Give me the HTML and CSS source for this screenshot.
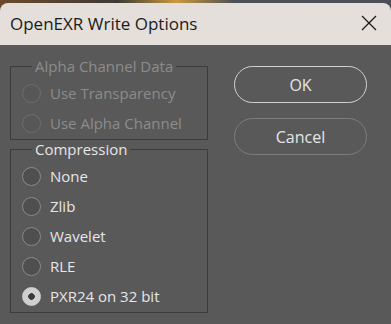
FILE: index.html
```html
<!DOCTYPE html>
<html lang="en">
<head>
  <meta charset="UTF-8">
  <title>OpenEXR Write Options</title>
  <link rel="stylesheet" href="styles.css">
</head>
<body>
  <div class="window">
    <div class="titlebar">
      <span class="title">OpenEXR Write Options</span>
      <svg class="close" width="16" height="16" viewBox="0 0 16 16">
        <path d="M1 1 L15 15 M15 1 L1 15" stroke="#1a1a1a" stroke-width="1.3" fill="none"/>
      </svg>
    </div>

    <div class="content">
      <div class="options">
        <!-- Alpha channel (disabled) -->
        <fieldset class="group disabled">
          <legend>Alpha Channel Data</legend>
          <div class="radio"><span class="dot"></span>Use Transparency</div>
          <div class="radio"><span class="dot"></span>Use Alpha Channel</div>
        </fieldset>

        <!-- Compression -->
        <fieldset class="group">
          <legend>Compression</legend>
          <div class="radio"><span class="dot"></span>None</div>
          <div class="radio"><span class="dot"></span>Zlib</div>
          <div class="radio"><span class="dot"></span>Wavelet</div>
          <div class="radio"><span class="dot"></span>RLE</div>
          <div class="radio checked"><span class="dot"></span>PXR24 on 32 bit</div>
        </fieldset>
      </div>

      <div class="buttons">
        <div class="btn primary">OK</div>
        <div class="btn">Cancel</div>
      </div>
    </div>
  </div>
</body>
</html>
```

FILE: styles.css
```css
body {
  margin: 0;
  width: 391px;
  height: 324px;
  overflow: hidden;
  background: linear-gradient(90deg, #6b4a2a 0%, #3d3a36 30%, #c99a3c 45%, #4b4f56 60%, #4b5058 100%);
  font-family: "Open Sans", "Noto Sans", sans-serif;
}

.window {
  margin-top: 3px;
  height: 321px;
  background-color: #595959;
  border-radius: 8px 8px 0 0;
  overflow: hidden;
}

.titlebar {
  height: 42px;
  background-color: #e4dfda;
  display: flex;
  align-items: center;
  justify-content: space-between;
  padding: 0 14px 0 10px;
}

.title {
  font-size: 17px;
  color: #1b1b1b;
  margin-top: -2px;
}

.close {
  margin-top: -2px;
}

.content {
  display: flex;
  padding: 12px 0 0 10px;
}

.options {
  width: 198px;
}

.group {
  margin: 0;
  border: 1px solid #3c3c3c;
  padding: 3px 0 1px 11px;
  color: #e6e6e6;
  font-size: 15px;
}

.group legend {
  padding: 0 3px;
  margin-left: 10px;
  line-height: 18px;
}

.group.disabled {
  color: #8c8c8c;
}

.radio {
  display: flex;
  align-items: center;
  gap: 9px;
  height: 30px;
}

.dot {
  width: 17px;
  height: 17px;
  border-radius: 50%;
  border: 1px solid #8a8a8a;
  background-color: #4f4f4f;
  flex: none;
}

.disabled .dot {
  border-color: #6e6e6e;
  background-color: #575757;
}

.checked .dot {
  border-color: #cfcfcf;
  background: radial-gradient(circle, #3a3a3a 0 3px, #cfcfcf 3.6px);
}

.buttons {
  display: flex;
  flex-direction: column;
  gap: 15px;
  margin-left: 26px;
  padding-top: 9px;
}

.btn {
  width: 131px;
  height: 35px;
  border: 1.5px solid #d2d2d2;
  border-radius: 19px;
  color: #e6e6e6;
  font-size: 16px;
  display: flex;
  align-items: center;
  justify-content: center;
}

.btn + .btn {
  border-color: #7d7d7d;
}
```
